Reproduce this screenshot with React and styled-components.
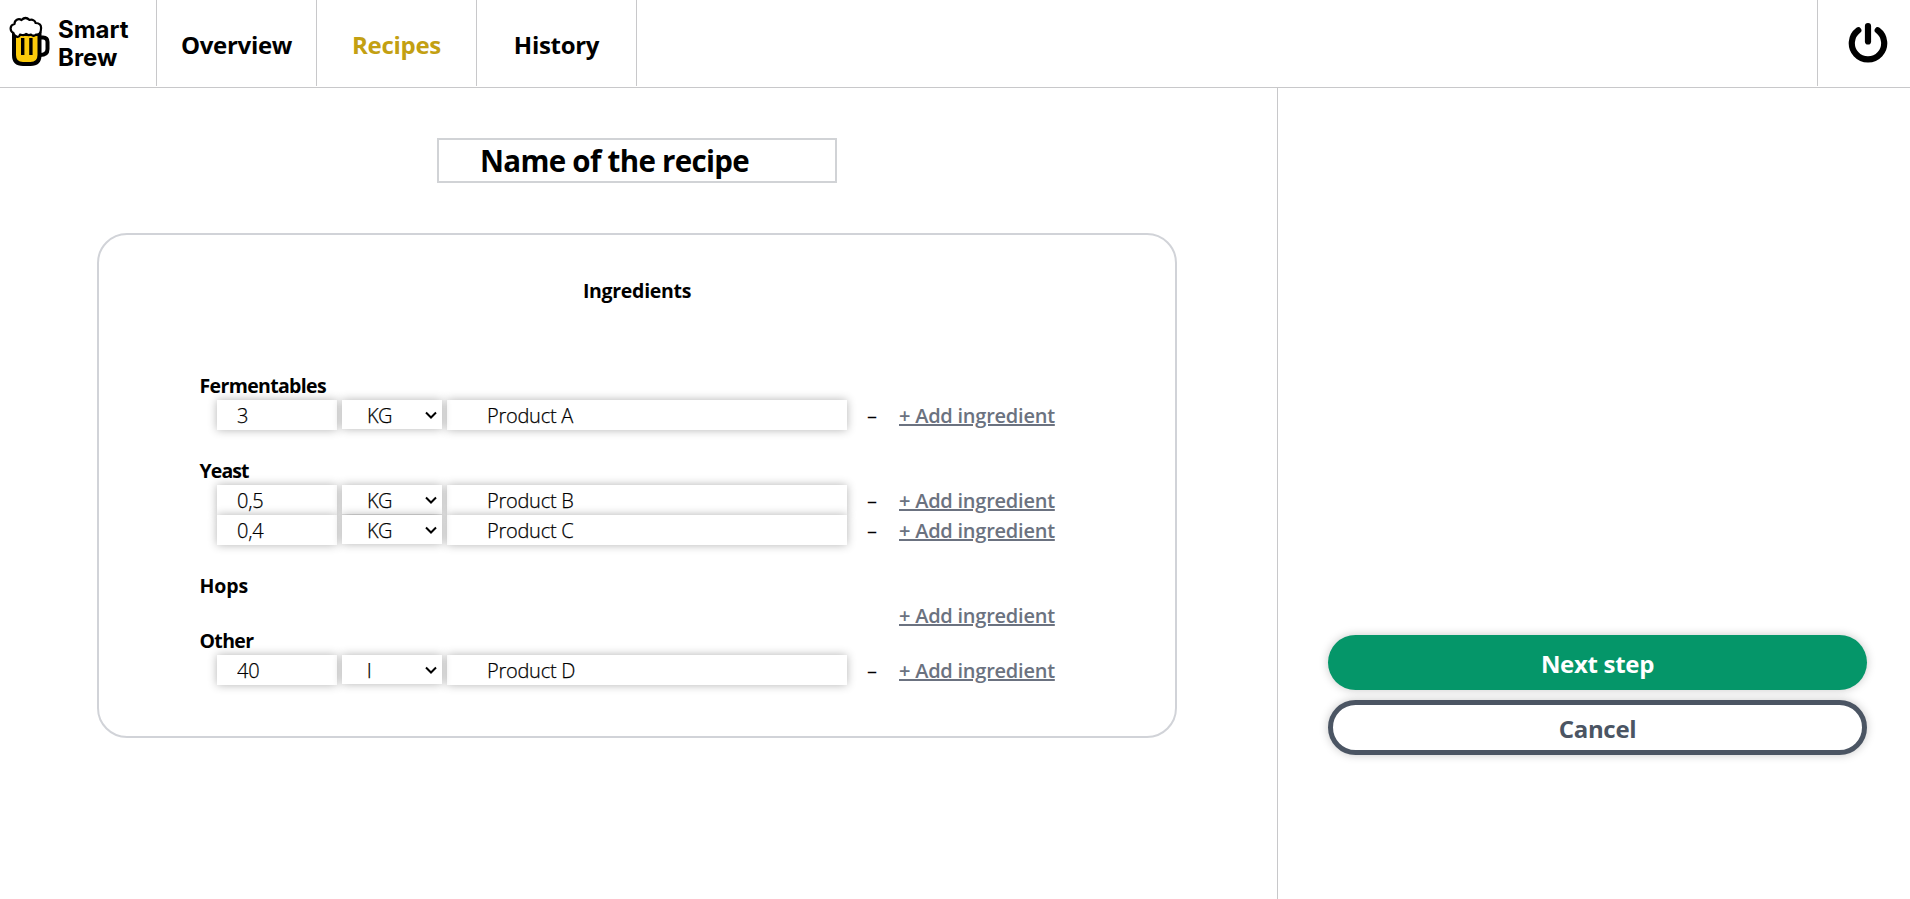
import React from "react";
import styled, { createGlobalStyle } from "styled-components";

const GlobalStyle = createGlobalStyle`
  * { box-sizing: border-box; }
  body {
    margin: 0;
    background: #fff;
    color: #000;
    font-family: "Open Sans", "Noto Sans", sans-serif;
    font-size: 20px;
  }
`;

const Page = styled.div`
  display: flex;
  flex-direction: column;
  height: 100vh;
  overflow: hidden;
`;

const Header = styled.header`
  display: flex;
  flex: none;
  height: 88px;
  padding-bottom: 1px;
  border-bottom: 1px solid #c8c8ca;
`;

const Brand = styled.div`
  display: flex;
  width: 157px;
  padding: 16px 0 0 9px;
  border-right: 1px solid #c8c8ca;
`;

const BrandName = styled.div`
  margin-left: 8px;
  font-family: Inter, sans-serif;
  font-size: 24px;
  font-weight: 700;
  line-height: 27.5px;
`;

const NavItem = styled.a`
  display: flex;
  align-items: center;
  justify-content: center;
  width: 160px;
  padding: 2px 0 0;
  border-right: 1px solid #c8c8ca;
  color: ${(p) => (p.$active ? "#c3a012" : "#000")};
  font-size: 24px;
  font-weight: 700;
  letter-spacing: -0.3px;
`;

const Power = styled.button`
  display: flex;
  align-items: center;
  justify-content: center;
  width: 93px;
  margin-left: auto;
  padding: 0 0 2px 8px;
  border: 0;
  border-left: 1px solid #c8c8ca;
  background: none;
`;

const Body = styled.div`
  display: flex;
  flex: 1;
`;

const Editor = styled.main`
  display: flex;
  flex-direction: column;
  align-items: center;
  width: 1278px;
  padding: 50px 3px 0 0;
  border-right: 1px solid #c8c8ca;
`;

const TitleInput = styled.input`
  width: 400px;
  height: 45px;
  padding: 0 0 0 41px;
  border: 2px solid #d1d3d6;
  outline: 0;
  font: 700 29.5px "Open Sans", sans-serif;
  letter-spacing: -0.7px;
`;

const Card = styled.section`
  width: 1080px;
  height: 505px;
  margin-top: 50px;
  padding: 41px 101px 0 100px;
  border: 2px solid #d1d3d8;
  border-radius: 30px;
`;

const CardTitle = styled.h2`
  margin: 0 0 64px;
  padding-left: 1px;
  font-size: 19.5px;
  font-weight: 700;
  line-height: 30px;
  letter-spacing: -0.3px;
  text-align: center;
`;

const Group = styled.div`
  margin-bottom: ${(p) => (p.$empty ? "-5px" : "25px")};
`;

const GroupTitle = styled.h3`
  height: 30px;
  margin: 0;
  padding-left: 0.5px;
  font-size: 19.5px;
  font-weight: 700;
  line-height: 32px;
  letter-spacing: ${(p) => p.$tracking}px;
`;

const Row = styled.div`
  display: flex;
  gap: 5px;
  height: 30px;
  padding-left: 18px;
`;

const Field = styled.input`
  width: ${(p) => p.$width}px;
  height: 30px;
  padding: 1px 0 0 ${(p) => p.$indent}px;
  border: 0;
  outline: 0;
  background: #fff;
  box-shadow: 0 0 10px rgba(0, 0, 0, 0.3);
  color: #000;
  font: 300 20px "Open Sans", sans-serif;
  letter-spacing: -0.25px;
  -webkit-text-stroke: 0.25px #000;
`;

const UnitBox = styled.div`
  position: relative;
  width: 100px;
  height: 29px;
  box-shadow: 0 0 10px rgba(0, 0, 0, 0.3);
`;

const Unit = styled.select`
  display: block;
  width: 100%;
  height: 100%;
  padding: 2px 0 0 25px;
  appearance: none;
  border: 0;
  outline: 0;
  border-radius: 0;
  background: #fff;
  color: #000;
  font: 300 20px "Open Sans", sans-serif;
  letter-spacing: -0.5px;
  -webkit-text-stroke: 0.25px #000;
`;

const Chevron = styled.svg`
  position: absolute;
  top: 11px;
  right: 5px;
  pointer-events: none;
`;

const Remove = styled.span`
  width: 27px;
  padding-left: 15px;
  line-height: 31px;
`;

const AddLink = styled.a`
  margin-left: ${(p) => (p.$alone ? 682 : 15)}px;
  color: #6b7280;
  font-weight: 600;
  line-height: 31px;
  letter-spacing: -0.24px;
  text-decoration: underline;
  white-space: nowrap;
`;

const Actions = styled.aside`
  display: flex;
  flex: 1;
  flex-direction: column;
  gap: 10px;
  padding: 547px 43px 0 50px;
`;

const ActionButton = styled.button`
  height: 55px;
  padding: 2px 0 0;
  border: ${(p) => (p.$primary ? "0" : "5px solid #4b5563")};
  border-radius: 28px;
  background: ${(p) => (p.$primary ? "#059669" : "#fff")};
  box-shadow: 0 0 10px rgba(0, 0, 0, 0.22);
  color: ${(p) => (p.$primary ? "#fff" : "#4b5563")};
  font: 700 24px "Open Sans", sans-serif;
  letter-spacing: -0.3px;
`;

const groups = [
  { title: "Fermentables", tracking: -0.65, items: [["3", "KG", "Product A"]] },
  {
    title: "Yeast",
    tracking: -0.9,
    items: [
      ["0,5", "KG", "Product B"],
      ["0,4", "KG", "Product C"],
    ],
  },
  { title: "Hops", tracking: -0.1, items: [] },
  { title: "Other", tracking: -0.65, items: [["40", "l", "Product D"]] },
];

const BeerIcon = () => (
  <svg width="41" height="51" viewBox="9 16 41 51" fill="none" stroke="#000">
    <path d="M40 37.500h3q4.500 0 4.500 4.500v7q0 6-7.500 6" strokeWidth="4" />
    <path d="M14 34v21q0 9 9 9h7.500q9 0 9-9V34z" fill="#fccb0b" strokeWidth="4" />
    <path
      d="M16.500 36.500c-2-1-3-2-3-3.500-4-2-4-8 1-9 0-4 4-6 7-4 3-3 6-2 8 0 3-1 6 1 6 3 4 0 6 2 5.500 6 0 4-2 6-5 5.500-2 2-4 1-5 0-2 1-3 1-5-.5-2 2-4 1-6 .5-.5 2-2 3-3.500 2z"
      fill="#fff"
      strokeWidth="2.200"
      strokeLinejoin="round"
    />
    <path d="M22.700 38v17M30.900 38v17" strokeWidth="3.400" />
  </svg>
);

const PowerIcon = () => (
  <svg width="40" height="42" viewBox="0 0 40 42" fill="none" stroke="#000" strokeLinecap="round">
    <path d="M10.300 9.300a16.200 16.200 0 1 0 19.400 0" strokeWidth="6.200" />
    <path d="M20 5v15.500" strokeWidth="6.200" />
  </svg>
);

const UnitSelect = ({ value }) => (
  <UnitBox>
    <Unit defaultValue={value}>
      <option>KG</option>
      <option>l</option>
    </Unit>
    <Chevron width="12" height="8" viewBox="0 0 12 8" fill="none" stroke="#000" strokeWidth="2">
      <path d="M1 1.500l5 5 5-5" />
    </Chevron>
  </UnitBox>
);

export default function App() {
  return (
    <Page>
      <GlobalStyle />
      <Header>
        <Brand>
          <BeerIcon />
          <BrandName>
            Smart
            <br />
            Brew
          </BrandName>
        </Brand>
        <NavItem>Overview</NavItem>
        <NavItem $active>Recipes</NavItem>
        <NavItem>History</NavItem>
        <Power aria-label="Log out">
          <PowerIcon />
        </Power>
      </Header>
      <Body>
        <Editor>
          <TitleInput defaultValue="Name of the recipe" />
          <Card>
            <CardTitle>Ingredients</CardTitle>
            {groups.map(({ title, tracking, items }) => (
              <Group key={title} $empty={items.length === 0}>
                <GroupTitle $tracking={tracking}>{title}</GroupTitle>
                {items.map(([amount, unit, product]) => (
                  <Row key={product}>
                    <Field $width={120} $indent={20} defaultValue={amount} />
                    <UnitSelect value={unit} />
                    <Field $width={400} $indent={40} defaultValue={product} />
                    <Remove>–</Remove>
                    <AddLink>+ Add ingredient</AddLink>
                  </Row>
                ))}
                {items.length === 0 && (
                  <Row>
                    <AddLink $alone>+ Add ingredient</AddLink>
                  </Row>
                )}
              </Group>
            ))}
          </Card>
        </Editor>
        <Actions>
          <ActionButton $primary>Next step</ActionButton>
          <ActionButton>Cancel</ActionButton>
        </Actions>
      </Body>
    </Page>
  );
}
